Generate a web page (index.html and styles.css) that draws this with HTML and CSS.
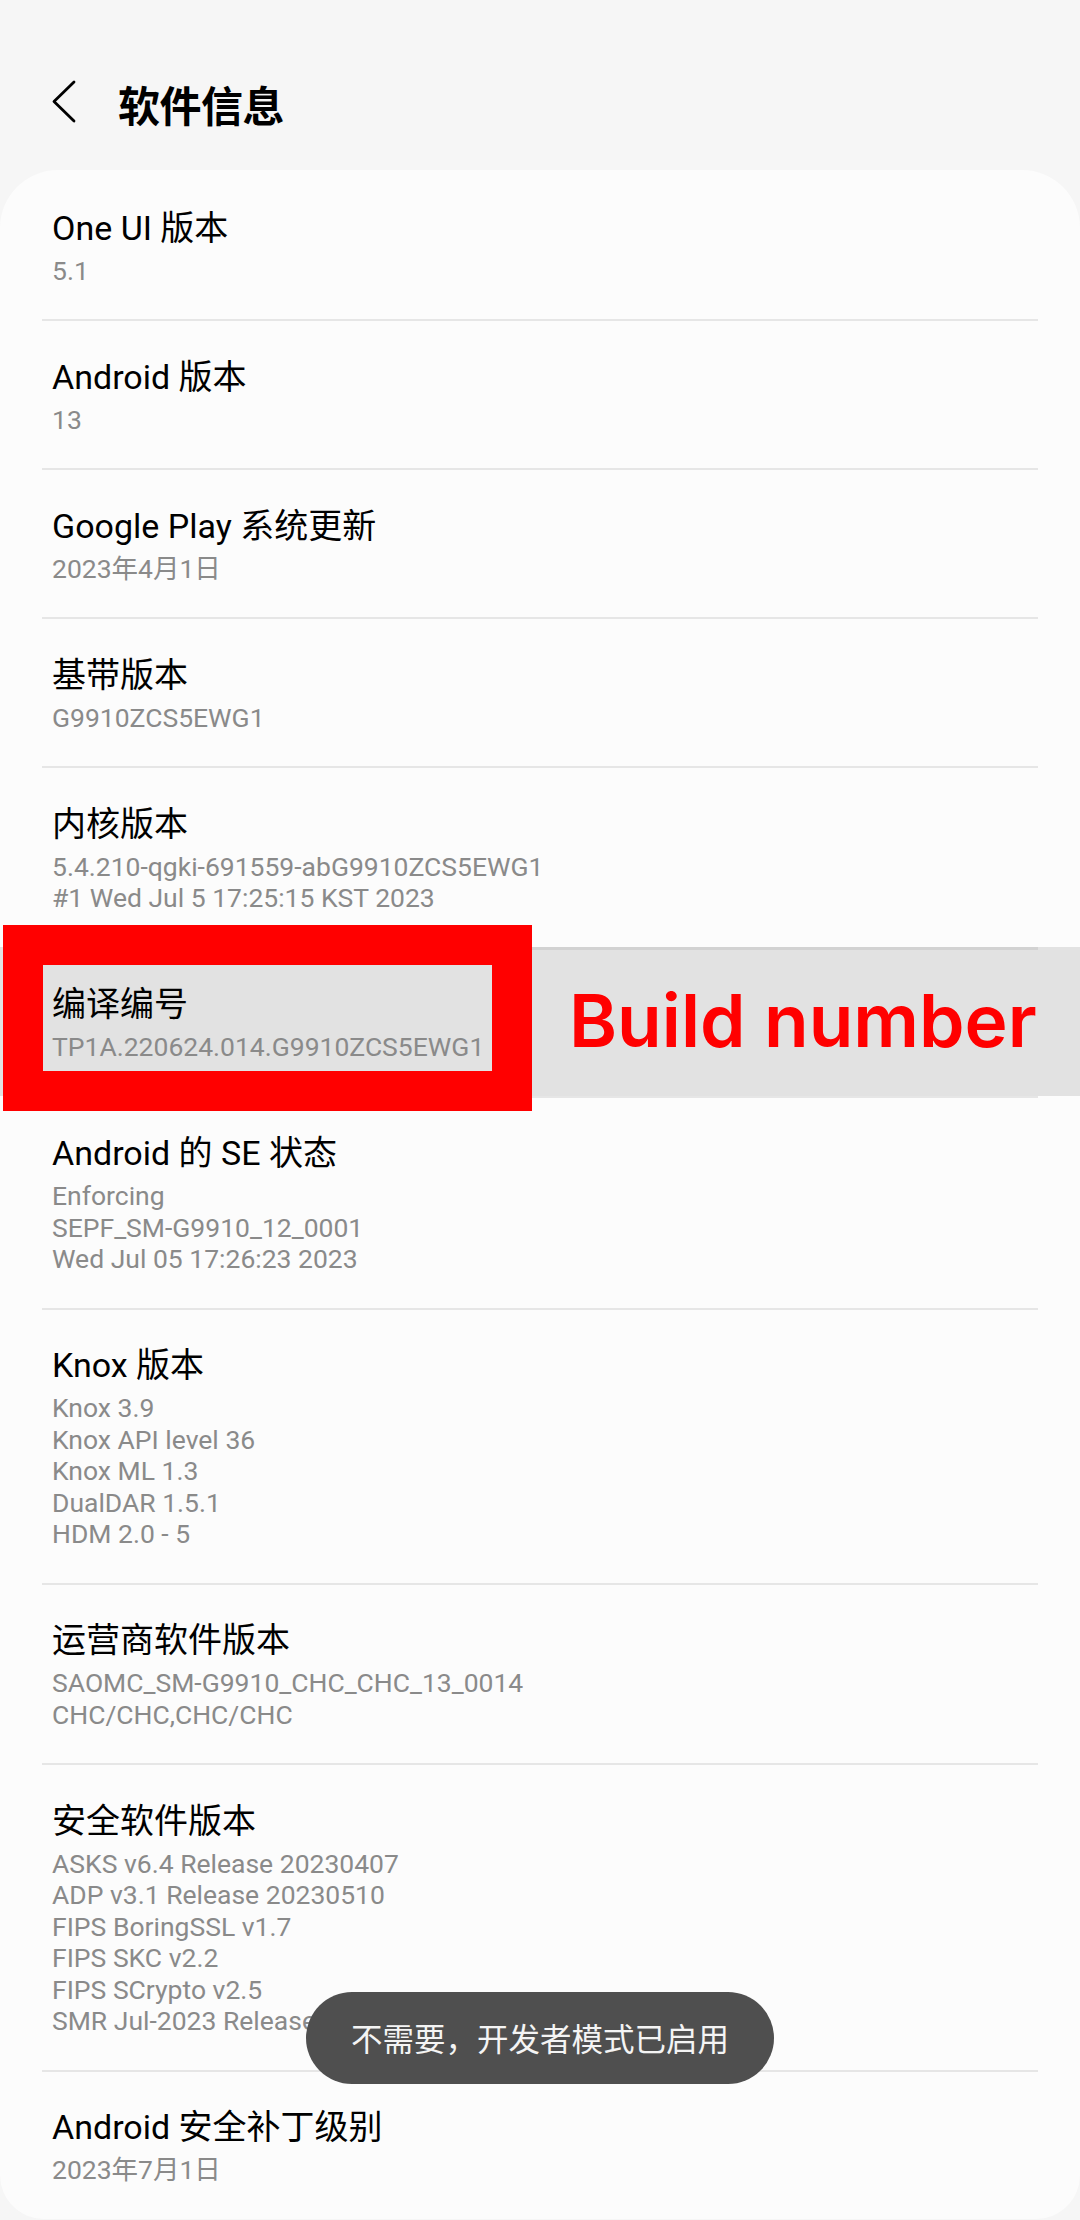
FILE: index.html
```html
<!DOCTYPE html>
<html lang="zh-CN">
<head>
<meta charset="utf-8">
<title>软件信息</title>
<link rel="stylesheet" href="styles.css">
</head>
<body>
<div class="screen">
  <header class="header">
    <svg class="back" width="30" height="44" viewBox="0 0 30 44"><path d="M24 2 L4 21.5 L24 41" fill="none" stroke="#000" stroke-width="2.8" stroke-linecap="round" stroke-linejoin="round"/></svg>
    <h1 class="title">软件信息</h1>
  </header>
  <main class="card">
    <div class="item first">
      <div class="item-title">One UI 版本</div>
      <div class="item-sub"><span>5.1</span></div>
    </div>
    <div class="item">
      <div class="item-title">Android 版本</div>
      <div class="item-sub"><span>13</span></div>
    </div>
    <div class="item">
      <div class="item-title">Google Play 系统更新</div>
      <div class="item-sub"><span>2023年4月1日</span></div>
    </div>
    <div class="item">
      <div class="item-title">基带版本</div>
      <div class="item-sub"><span>G9910ZCS5EWG1</span></div>
    </div>
    <div class="item">
      <div class="item-title">内核版本</div>
      <div class="item-sub"><span>5.4.210-qgki-691559-abG9910ZCS5EWG1</span><span>#1 Wed Jul 5 17:25:15 KST 2023</span></div>
    </div>
    <div class="item highlighted">
      <div class="item-title">编译编号</div>
      <div class="item-sub"><span>TP1A.220624.014.G9910ZCS5EWG1</span></div>
      <div class="red-frame"></div>
      <div class="annotation">Build number</div>
    </div>
    <div class="item">
      <div class="item-title">Android 的 SE 状态</div>
      <div class="item-sub"><span>Enforcing</span><span>SEPF_SM-G9910_12_0001</span><span>Wed Jul 05 17:26:23 2023</span></div>
    </div>
    <div class="item">
      <div class="item-title">Knox 版本</div>
      <div class="item-sub"><span>Knox 3.9</span><span>Knox API level 36</span><span>Knox ML 1.3</span><span>DualDAR 1.5.1</span><span>HDM 2.0 - 5</span></div>
    </div>
    <div class="item">
      <div class="item-title">运营商软件版本</div>
      <div class="item-sub"><span>SAOMC_SM-G9910_CHC_CHC_13_0014</span><span>CHC/CHC,CHC/CHC</span></div>
    </div>
    <div class="item">
      <div class="item-title">安全软件版本</div>
      <div class="item-sub"><span>ASKS v6.4 Release 20230407</span><span>ADP v3.1 Release 20230510</span><span>FIPS BoringSSL v1.7</span><span>FIPS SKC v2.2</span><span>FIPS SCrypto v2.5</span><span>SMR Jul-2023 Release 1</span></div>
    </div>
    <div class="item">
      <div class="item-title">Android 安全补丁级别</div>
      <div class="item-sub"><span>2023年7月1日</span></div>
    </div>
  </main>
  <div class="toast">不需要，开发者模式已启用</div>
</div>
</body>
</html>
```

FILE: styles.css
```css
* { box-sizing: border-box; margin: 0; padding: 0; }

html, body {
  width: 1080px;
  height: 2220px;
  overflow: hidden;
  background: #f6f6f6;
}

body {
  font-family: Roboto, "Noto Sans CJK SC", sans-serif;
  color: #000;
}

.screen {
  position: relative;
  width: 1080px;
  height: 2220px;
}

.header {
  height: 170px;
  padding-top: 37px;
  display: flex;
  align-items: center;
}

.back {
  margin-left: 50px;
  margin-top: -4px;
  flex: none;
}

.title {
  margin-left: 38px;
  font-family: "Noto Sans CJK SC", sans-serif;
  font-weight: 700;
  font-size: 42px;
  line-height: 50px;
  letter-spacing: -0.5px;
}

.card {
  background: #fcfcfc;
  border-radius: 58px 58px 44px 44px;
}

.item {
  position: relative;
  margin: 0 42px;
  padding: 34.5px 10px 33px 10px;
  border-top: 2px solid #e6e6e6;
}

.item.first {
  border-top-color: transparent;
}

.item-title {
  font-size: 34px;
  line-height: 42px;
  color: #000;
}

.item-sub {
  margin-top: 6px;
  font-size: 26.5px;
  line-height: 31.5px;
  color: #8a8a8a;
  display: flex;
  flex-direction: column;
}

.item.highlighted {
  margin: 0;
  padding-left: 52px;
  padding-right: 52px;
  background: #e2e2e2;
  border-top: none;
  padding-top: 36.5px;
}

.item.highlighted::before {
  content: "";
  position: absolute;
  top: 0;
  left: 42px;
  right: 42px;
  height: 3px;
  background: #d2d2d2;
}

.red-frame {
  position: absolute;
  z-index: 5;
  left: 3px;
  top: -22px;
  width: 529px;
  height: 186px;
  border: 40px solid #ff0000;
}

.annotation {
  position: absolute;
  z-index: 5;
  left: 569px;
  top: 37px;
  font-family: Inter, Lato, sans-serif;
  font-weight: 600;
  font-size: 73px;
  line-height: 73px;
  color: #ff0000;
  white-space: nowrap;
}

.toast {
  position: absolute;
  z-index: 10;
  left: 306px;
  top: 1992px;
  width: 468px;
  height: 92px;
  border-radius: 46px;
  background: #4f4f4f;
  color: #f4f4f4;
  font-family: "Noto Sans CJK SC", sans-serif;
  font-size: 31.5px;
  display: flex;
  align-items: center;
  justify-content: center;
  padding-bottom: 2px;
}
```
